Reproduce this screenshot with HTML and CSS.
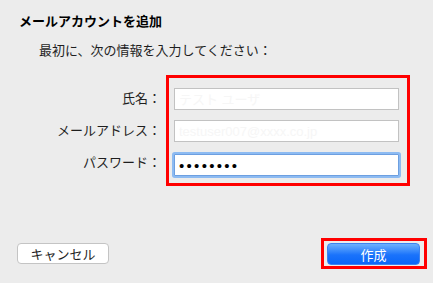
FILE: index.html
```html
<!DOCTYPE html>
<html>
<head>
  <meta charset="UTF-8">
  <title>メールアカウントを追加</title>
  <link rel="stylesheet" href="styles.css">
</head>
<body>
  <div class="sheet">
    <h1 class="title">メールアカウントを追加</h1>
    <p class="intro">最初に、次の情報を入力してください：</p>
    <div class="form">
      <div class="labels">
        <label>氏名：</label>
        <label>メールアドレス：</label>
        <label>パスワード：</label>
      </div>
      <div class="fields mark">
        <input type="text" placeholder="テスト ユーザ">
        <input type="text" placeholder="testuser007@xxxx.co.jp">
        <input type="password" class="focused" value="12345678">
      </div>
    </div>
    <div class="footer">
      <button class="btn">キャンセル</button>
      <div class="mark">
        <button class="btn primary">作成</button>
      </div>
    </div>
  </div>
</body>
</html>
```

FILE: styles.css
```css
html, body {height: 100%}
body {margin: 0; background: #ececec; color: #1e1e1e; font-family: "Liberation Sans", "Noto Sans CJK JP", sans-serif; font-size: 13px;}

.sheet {height: 100%; box-sizing: border-box; display: flex; flex-direction: column; padding: 14px 6px 14px 0;}
.title {margin: 0 0 13px 19px; font-size: 13px; line-height: 16px; font-weight: bold; color: #000;}
.intro {margin: 0 0 16px 39px; line-height: 16px;}

.mark {border: 3px solid #ff0000;}

.form {display: flex;}
.labels {width: 166px; box-sizing: border-box; padding-top: 13px; display: flex; flex-direction: column; gap: 10px; align-items: flex-end;}
.labels label {height: 22px; line-height: 22px; padding-right: 5px;}
.fields {width: 225px; padding: 10px 8px 7px 5px; display: flex; flex-direction: column; gap: 10px;}
.fields input {height: 22px; box-sizing: border-box; margin: 0; border: 1px solid #c2c2c2; background: #fff; padding: 0 4px; font-family: inherit; font-size: 13px; outline: none;}
.fields input::placeholder {color: #f6f6f6;}
.fields input.focused {border-color: #6d9fe0; box-shadow: 0 0 0 2px #8dbbf2; border-radius: 1px; letter-spacing: 2.3px; font-size: 15px; padding-left: 4px; margin-top: 2px;}

.footer {margin-top: auto; display: flex; justify-content: space-between; align-items: center;}
.footer > .mark {padding: 2px 4px 1px 3px;}
.btn {height: 21px; box-sizing: border-box; margin: 0 0 0 17px; padding: 0; width: 92px; border: 1px solid #c4c4c4; border-radius: 4px; background: #fff; font-family: inherit; font-size: 13px; color: #1e1e1e;}
.btn.primary {margin: 0; width: 93px; height: 22px; border: 1px solid #3d82f0; color: #fff; background: linear-gradient(#6eb1fc, #1a73fb 55%, #0a66f8);}
```
